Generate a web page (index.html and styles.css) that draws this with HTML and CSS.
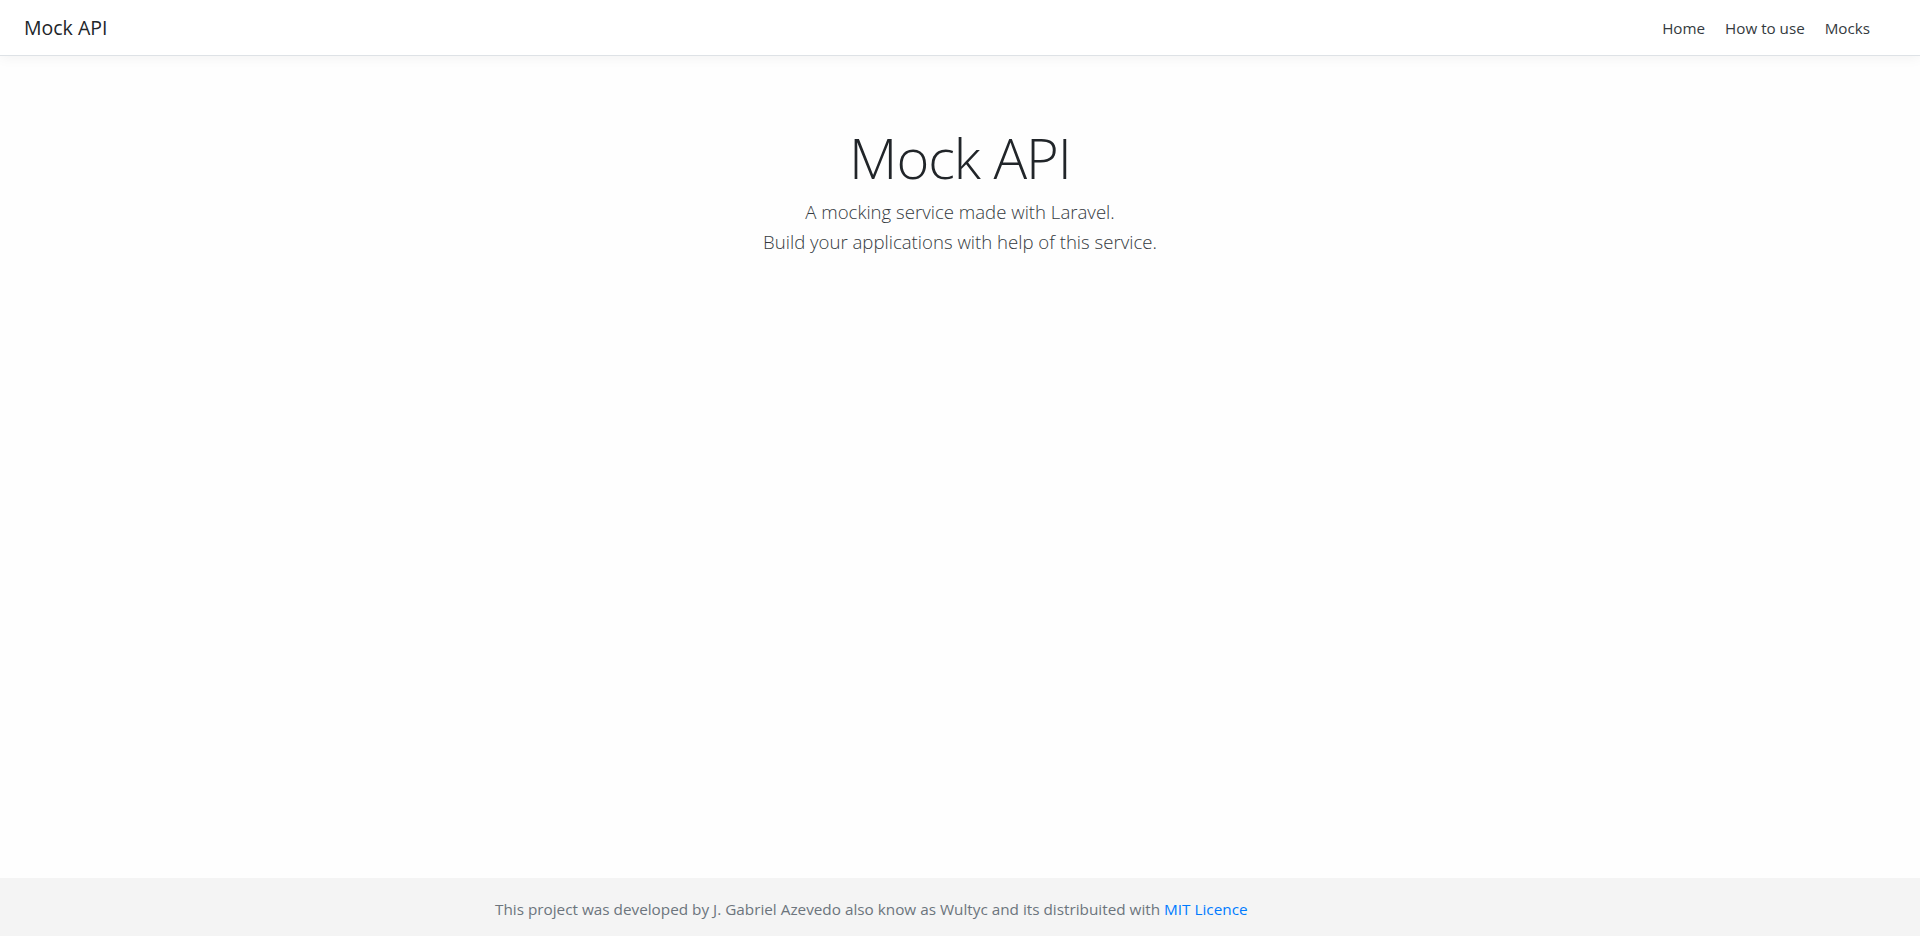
FILE: index.html
```html
<!DOCTYPE html>
<html lang="en">
<head>
<meta charset="utf-8">
<title>Mock API</title>
<link rel="stylesheet" href="styles.css">
</head>
<body>
<div class="page">
  <nav class="navbar">
    <a class="brand" href="#">Mock API</a>
    <ul class="nav-links">
      <li><a href="#">Home</a></li>
      <li><a href="#">How to use</a></li>
      <li><a href="#">Mocks</a></li>
    </ul>
  </nav>
  <main class="hero">
    <h1 class="title">Mock API</h1>
    <p class="lead">A mocking service made with Laravel.<br>Build your applications with help of this service.</p>
  </main>
  <footer class="footer">
    <div class="container">
      <p>This project was developed by J. Gabriel Azevedo also know as Wultyc and its distribuited with <a href="#">MIT Licence</a></p>
    </div>
  </footer>
</div>
</body>
</html>
```

FILE: styles.css
```css
* { box-sizing: border-box; }
html, body { margin: 0; padding: 0; height: 100%; }
body {
  font-family: "Open Sans", "Noto Sans", sans-serif;
  color: #212529;
  background: #fefefe;
}
.page {
  min-height: 100vh;
  display: flex;
  flex-direction: column;
}
.navbar {
  height: 56px;
  display: flex;
  align-items: center;
  justify-content: space-between;
  padding: 0 40px 0 24px;
  background: #fff;
  border-bottom: 1px solid #dee2e6;
  box-shadow: 0 2px 12px rgba(0,0,0,0.05);
}
.brand {
  font-size: 19.5px;
  color: #212529;
  text-decoration: none;
}
.nav-links {
  list-style: none;
  margin: 0;
  padding: 0;
  display: flex;
}
.nav-links a {
  display: block;
  padding: 8px 10px;
  font-size: 15.2px;
  color: #343a40;
  text-decoration: none;
}
.hero {
  flex: 1;
  display: flex;
  flex-direction: column;
  align-items: center;
  padding-top: 68px;
}
.title {
  margin: 0;
  font-size: 56px;
  font-weight: 300;
  line-height: 1.2;
  letter-spacing: -1px;
}
.lead {
  margin: 6px 0 0;
  font-size: 18.6px;
  font-weight: 300;
  line-height: 30px;
  text-align: center;
  color: #343a40;
}
.footer {
  height: 58px;
  padding-top: 4px;
  background: #f4f4f4;
  display: flex;
  align-items: center;
}
.container {
  width: 960px;
  margin: 0 auto;
  padding: 0 15px;
}
.footer p {
  margin: 0;
  font-size: 15.3px;
  color: #6c757d;
}
.footer a {
  color: #007bff;
  text-decoration: none;
}
```
